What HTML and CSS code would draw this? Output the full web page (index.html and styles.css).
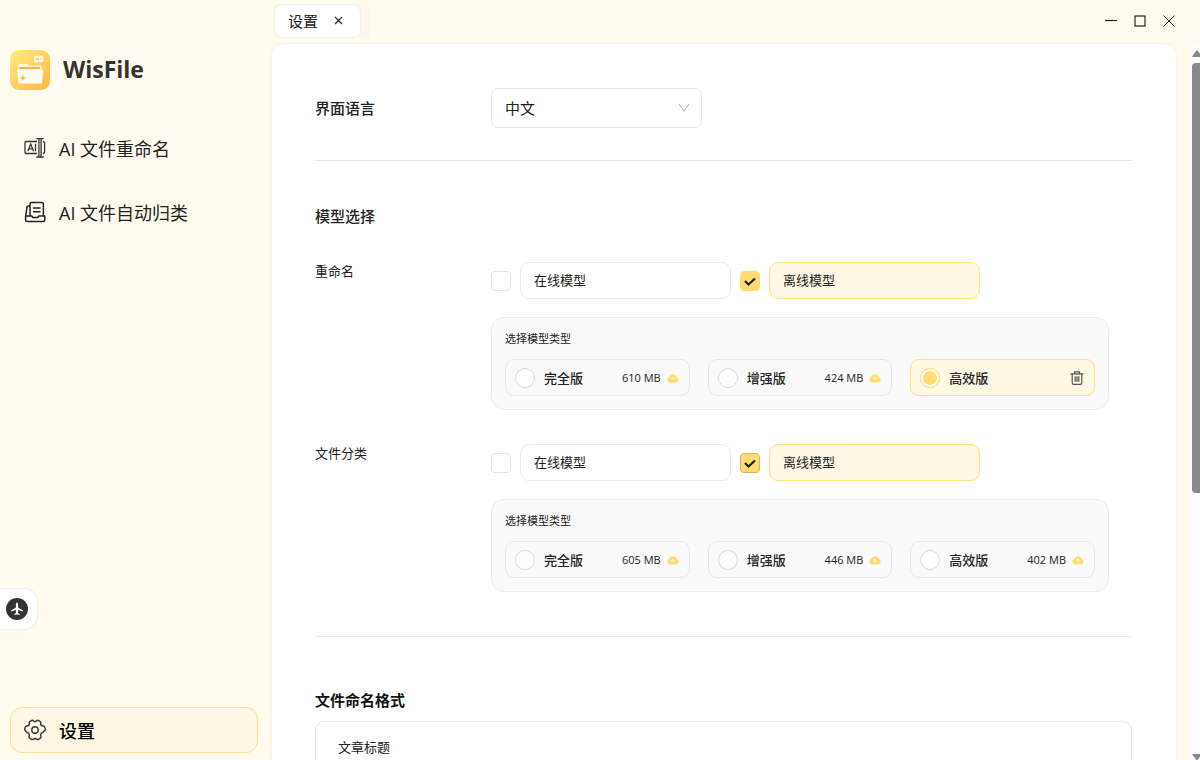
FILE: index.html
```html
<!DOCTYPE html>
<html lang="zh-CN">
<head>
    <meta charset="UTF-8">
    <meta name="viewport" content="width=device-width, initial-scale=1.0">
    <title>WisFile</title>
    <link rel="stylesheet" href="styles.css">
</head>
<body>
    <header class="titlebar">
        <div class="tabs">
            <div class="tab">
                <span>设置</span>
                <button class="icon-button" aria-label="关闭标签">
                    <svg width="9" height="9" viewBox="0 0 9 9"><path d="M1 1l7 7M8 1l-7 7" stroke="#333" stroke-width="1.3"/></svg>
                </button>
            </div>
        </div>
        <div class="window-controls">
            <button class="icon-button" aria-label="最小化">
                <svg width="12" height="12" viewBox="0 0 12 12"><path d="M0 5.5h12" stroke="#222" stroke-width="1.2"/></svg>
            </button>
            <button class="icon-button" aria-label="最大化">
                <svg width="12" height="12" viewBox="0 0 12 12"><rect x="1" y="1" width="10" height="10" fill="none" stroke="#222" stroke-width="1.2"/></svg>
            </button>
            <button class="icon-button" aria-label="关闭">
                <svg width="12" height="12" viewBox="0 0 12 12"><path d="M.5.5l11 11M11.5.5l-11 11" stroke="#333"/></svg>
            </button>
        </div>
    </header>

    <div class="layout">
        <aside class="sidebar">
            <div class="brand">
                <svg width="40" height="40" viewBox="0 0 40 40">
                    <defs>
                        <linearGradient id="logoBg" x1="0" y1="0" x2="1" y2="1">
                            <stop offset="0" stop-color="#ffec78"/>
                            <stop offset="1" stop-color="#ffb64a"/>
                        </linearGradient>
                    </defs>
                    <rect width="40" height="40" rx="9" fill="url(#logoBg)"/>
                    <path d="M8 15.500c0-1 .8-1.800 1.800-1.800h7l2 1.800h11c1.200 0 2 .8 2 1.800V21H8z" fill="#fff4dc"/>
                    <path d="M9.500 17h20.500v2.200h-20.500z" fill="#ffb347"/>
                    <path d="M8 19.500h24.200c.7 0 1.100.5 1 1.100l-1.200 11.400c-.1 1-.8 1.600-1.700 1.600H10c-.9 0-1.600-.6-1.700-1.600L7 20.600c-.1-.6.300-1.100 1-1.100z" fill="#fffdf8"/>
                    <path d="M12.800 24.500l1 2.600 2.600 1-2.600 1-1 2.600-1-2.600-2.600-1 2.600-1z" fill="#ffc04d"/>
                    <path d="M25 5.800h7.200c.6 0 1 .4 1 1v4.400c0 .6-.4 1-1 1h-5l-2 1.500v-1.500h-.2c-.6 0-1-.4-1-1V6.800c0-.6.400-1 1-1z" fill="#fff5d6"/>
                    <path d="M26 9h1M28.200 8.200v1.600M30.500 9h1" stroke="#f9a64a" stroke-width="1.200"/>
                </svg>
                <h1>WisFile</h1>
            </div>
            <nav class="nav">
                <a class="nav-item" href="#">
                    <svg width="22" height="22" viewBox="0 0 22 22" fill="none" stroke="#333" stroke-width="1.300">
                        <path d="M13 4.500H2.200A1.200 1.200 0 0 0 1 5.700v9.600a1.200 1.200 0 0 0 1.200 1.200H13M18.800 4.500a1.800 1.800 0 0 1 1.800 1.800v8.400a1.800 1.800 0 0 1-1.800 1.800"/>
                        <path d="M3.800 14.200L6.700 7l2.900 7.200M4.900 11.800h3.600M11.500 6.700v7.500"/>
                        <path d="M12.300 1.700h7.400M12.300 20h7.400M14.900 1.700v18.300M17.100 1.700v18.300"/>
                    </svg>
                    AI 文件重命名
                </a>
                <a class="nav-item" href="#">
                    <svg width="22" height="22" viewBox="0 0 22 22" fill="none" stroke="#222" stroke-width="1.500" stroke-linejoin="round">
                        <path d="M6 15V3.200A1.700 1.700 0 0 1 7.700 1.500h10A1.700 1.700 0 0 1 19.400 3.200V15"/>
                        <path d="M6 5H4.200A1.200 1.200 0 0 0 3 6.200L1.700 15"/>
                        <path d="M1.600 15h6.200l1 1.500h5l1-1.500h6v4a1.500 1.500 0 0 1-1.500 1.500H3.100a1.500 1.500 0 0 1-1.500-1.500z"/>
                        <path d="M9.500 7h6.500M9.500 10.700h6.500" stroke-linecap="round"/>
                    </svg>
                    AI 文件自动归类
                </a>
                <a class="nav-item nav-settings" href="#" aria-current="page">
                    <svg width="22" height="22" viewBox="0 0 22 22" fill="none" stroke="#333" stroke-width="1.400" stroke-linejoin="round">
                        <path d="M8 1.300Q9 1.200 9.500 2Q11 3.300 12.500 2Q13 1.200 14 1.300L16.300 2.600Q17 3.300 16.600 4.200Q16.500 6.800 19.200 7Q20.300 7.100 20.700 8L21.300 10.200Q21.400 11 20.700 11.600Q19.200 12.700 19.200 13.300Q17 13.600 16.600 15.800Q17.300 18 16.700 18.900L14.400 20.500Q13.500 20.900 12.800 20.200Q11 18.700 9.200 20.200Q8.500 20.900 7.600 20.500L5.300 18.900Q4.700 18 5.400 15.800Q5 13.600 2.800 13.300Q2.800 12.700 1.300 11.600Q.6 11 .7 10.200L1.300 8Q1.700 7.100 2.800 7Q5.500 6.800 5.400 4.200Q5 3.300 5.700 2.600Z"/>
                        <circle cx="11" cy="11" r="3.200"/>
                    </svg>
                    设置
                </a>
            </nav>
            <button class="float-button" aria-label="离线模式">
                <svg width="22" height="22" viewBox="0 0 22 22">
                    <circle cx="11" cy="11" r="11" fill="#333"/>
                    <path d="M11 4.800c.7 0 1.100.7 1.100 1.500v3.200l4.700 2.800v1.300l-4.700-1.500v2.900l1.500 1.100v1L11 16.400l-2.600.7v-1l1.500-1.100v-2.900l-4.700 1.500v-1.300l4.700-2.800V6.300c0-.8.400-1.500 1.100-1.500z" fill="#fff"/>
                </svg>
            </button>
        </aside>

        <main class="panel">
            <section class="section section-language">
                <label class="section-title" for="language">界面语言</label>
                <div class="select-wrap">
                    <select id="language">
                        <option>中文</option>
                        <option>English</option>
                    </select>
                    <svg width="12" height="10" viewBox="0 0 12 10"><path d="M1 1l5 7 5-7" fill="none" stroke="#bbb" stroke-width="1.200"/></svg>
                </div>
            </section>

            <section class="section section-models">
                <h2 class="section-title">模型选择</h2>
                <div class="row">
                    <div class="row-label">重命名</div>
                    <div class="row-content">
                        <div class="modes">
                            <input type="checkbox" id="rename-online">
                            <label class="mode" for="rename-online">在线模型</label>
                            <input type="checkbox" id="rename-offline" checked>
                            <label class="mode" for="rename-offline">离线模型</label>
                        </div>
                        <div class="types">
                            <h3>选择模型类型</h3>
                            <div class="type-list">
                                <div class="type">
                                    <input type="radio" name="rename-type" id="rename-full">
                                    <label for="rename-full">完全版</label>
                                    <span class="size">610 MB</span>
                                    <button class="icon-button" aria-label="下载"><svg width="12" height="10" viewBox="0 0 12 10"><use href="#cloud"/></svg></button>
                                </div>
                                <div class="type">
                                    <input type="radio" name="rename-type" id="rename-plus">
                                    <label for="rename-plus">增强版</label>
                                    <span class="size">424 MB</span>
                                    <button class="icon-button" aria-label="下载"><svg width="12" height="10" viewBox="0 0 12 10"><use href="#cloud"/></svg></button>
                                </div>
                                <div class="type selected">
                                    <input type="radio" name="rename-type" id="rename-fast" checked>
                                    <label for="rename-fast">高效版</label>
                                    <button class="icon-button" aria-label="删除">
                                        <svg width="14" height="14" viewBox="0 0 14 14" fill="none" stroke="#555" stroke-width="1.200"><path d="M.5 2.800h13M4.500 2.500V.8h5v1.700M2.200 3v8.700c0 1 .6 1.600 1.600 1.600h6.400c1 0 1.600-.6 1.600-1.600V3M5.200 5.200v5.600M7 5.200v5.600M8.800 5.200v5.600"/></svg>
                                    </button>
                                </div>
                            </div>
                        </div>
                    </div>
                </div>
                <div class="row">
                    <div class="row-label">文件分类</div>
                    <div class="row-content">
                        <div class="modes">
                            <input type="checkbox" id="sort-online">
                            <label class="mode" for="sort-online">在线模型</label>
                            <input type="checkbox" id="sort-offline" class="outlined" checked>
                            <label class="mode" for="sort-offline">离线模型</label>
                        </div>
                        <div class="types">
                            <h3>选择模型类型</h3>
                            <div class="type-list">
                                <div class="type">
                                    <input type="radio" name="sort-type" id="sort-full">
                                    <label for="sort-full">完全版</label>
                                    <span class="size">605 MB</span>
                                    <button class="icon-button" aria-label="下载"><svg width="12" height="10" viewBox="0 0 12 10"><use href="#cloud"/></svg></button>
                                </div>
                                <div class="type">
                                    <input type="radio" name="sort-type" id="sort-plus">
                                    <label for="sort-plus">增强版</label>
                                    <span class="size">446 MB</span>
                                    <button class="icon-button" aria-label="下载"><svg width="12" height="10" viewBox="0 0 12 10"><use href="#cloud"/></svg></button>
                                </div>
                                <div class="type">
                                    <input type="radio" name="sort-type" id="sort-fast">
                                    <label for="sort-fast">高效版</label>
                                    <span class="size">402 MB</span>
                                    <button class="icon-button" aria-label="下载"><svg width="12" height="10" viewBox="0 0 12 10"><use href="#cloud"/></svg></button>
                                </div>
                            </div>
                        </div>
                    </div>
                </div>
            </section>

            <section class="section section-format">
                <label class="section-title" for="name-format">文件命名格式</label>
                <input type="text" id="name-format" value="文章标题">
            </section>
        </main>

        <div class="scrollbar">
            <svg width="10" height="19" viewBox="0 0 10 19"><path d="M3 13q-1 0-.5-1l3.500-5q1-1.300 2 0l3.500 5v1z" fill="#888"/></svg>
            <div class="thumb"></div>
            <svg width="10" height="6" viewBox="0 0 10 6"><path d="M2 0h10l-4 5.500q-1 1-2 0z" fill="#888"/></svg>
        </div>
    </div>

    <svg class="symbols">
        <symbol id="cloud" viewBox="0 0 12 10">
            <path d="M3 9.500A2.900 2.900 0 0 1 2.200 3.900a4 4 0 0 1 7.600 0A2.900 2.900 0 0 1 9 9.500z" fill="#ffdc6e"/>
            <path d="M6 4.200v3M4.800 5.600L6 4.400l1.200 1.200" stroke="#fff" fill="none"/>
        </symbol>
    </svg>
</body>
</html>
```
FILE: styles.css
```css
* {
    margin: 0;
    padding: 0;
    box-sizing: border-box;
}

body {
    font-family: "Open Sans", "Noto Sans CJK SC", sans-serif;
    font-size: 13px;
    color: #222;
    background: #fffbee;
    height: 100vh;
    display: flex;
    flex-direction: column;
    overflow: hidden;
}

svg {
    display: block;
    flex-shrink: 0;
}

button,
input,
select {
    font: inherit;
    color: inherit;
}

.icon-button {
    border: none;
    background: none;
    cursor: pointer;
}

.symbols {
    display: none;
}

/* Title bar */
.titlebar {
    display: flex;
    justify-content: space-between;
    align-items: center;
    height: 44px;
    flex-shrink: 0;
    padding: 0 25px 2px 274px;
    border-bottom: 1px solid #fff8ea;
}

.tabs {
    padding-right: 9px;
    background: #fff7ea;
}

.tab {
    display: flex;
    align-items: center;
    gap: 16px;
    height: 34px;
    padding: 0 17px 0 13px;
    font-size: 15px;
    background: #fff;
    border: 1px solid #f0f0f0;
    border-radius: 8px;
}

.window-controls {
    display: flex;
    gap: 17px;
}

/* Layout */
.layout {
    display: flex;
    flex: 1;
    min-height: 0;
}

.sidebar {
    display: flex;
    flex-direction: column;
    width: 272px;
    flex-shrink: 0;
    padding: 6px 14px 7px 10px;
}

.brand {
    display: flex;
    align-items: center;
    gap: 13px;
    height: 40px;
    margin-bottom: 35px;
}

.brand h1 {
    font-size: 23px;
    line-height: 38px;
    padding-bottom: 2px;
    color: #333;
}

.nav {
    display: flex;
    flex-direction: column;
    flex: 1;
    gap: 18px;
}

.nav-item {
    display: flex;
    align-items: center;
    gap: 13px;
    height: 46px;
    padding: 0 13px;
    font-size: 18px;
    color: #222;
    text-decoration: none;
    border: 1px solid transparent;
    border-radius: 12px;
}

.nav-settings {
    margin-top: auto;
    font-weight: 500;
    color: #000;
    background: #fff8e5;
    border-color: #ffe08a;
}

.float-button {
    position: fixed;
    left: 0;
    bottom: 130px;
    padding: 9px 9px 9px 6px;
    background: #fff;
    border: 1px solid #eee;
    border-left: none;
    border-radius: 0 14px 14px 0;
}

.panel {
    flex: 1;
    min-width: 0;
    padding: 44px 44px 0 43px;
    background: #fff;
    border-radius: 14px 14px 0 0;
    box-shadow: 0 1px 4px rgba(0, 0, 0, 0.08);
}

/* Settings sections */
.section {
    border-bottom: 1px solid #e8e8e8;
}

.section-title {
    display: block;
    font-size: 15px;
    font-weight: 500;
    line-height: 22px;
}

.section-language {
    display: flex;
    align-items: center;
    padding-bottom: 32px;
}

.section-language .section-title {
    width: 176px;
}

.select-wrap {
    position: relative;
    width: 211px;
}

.select-wrap svg {
    position: absolute;
    right: 12px;
    top: 15px;
    pointer-events: none;
}

select {
    width: 100%;
    height: 40px;
    padding: 0 13px;
    font-size: 15px;
    background: #fff;
    border: 1px solid #e8e8e8;
    border-radius: 7px;
    appearance: none;
}

.section-models {
    padding: 44px 0;
}

.section-models .section-title {
    margin-bottom: 35px;
}

.row {
    display: flex;
}

.row + .row {
    margin-top: 34px;
}

.row-label {
    width: 176px;
    flex-shrink: 0;
    line-height: 18px;
}

.row-content {
    flex: 1;
    max-width: 618px;
}

.modes {
    display: flex;
    align-items: center;
    gap: 9px;
    margin-bottom: 18px;
}

.mode {
    width: 211px;
    height: 37px;
    padding: 0 13px;
    line-height: 35px;
    border: 1px solid #ebebeb;
    border-radius: 9px;
}

input[type="checkbox"] {
    width: 20px;
    height: 20px;
    flex-shrink: 0;
    border: 1px solid #e4e4e4;
    border-radius: 4px;
    background: #fff;
    appearance: none;
}

input[type="checkbox"]:checked {
    border-color: #ffdc73;
    background: #ffdc73 url("data:image/svg+xml,%3Csvg xmlns='http://www.w3.org/2000/svg' viewBox='0 0 18 18'%3E%3Cpath d='M4 9l3.500 3.500L14 6.500' fill='none' stroke='%23222' stroke-width='2.200'/%3E%3C/svg%3E") center / 18px no-repeat;
}

input[type="checkbox"].outlined:checked {
    border-color: #d4b55c;
}

input[type="checkbox"]:checked + .mode {
    background: #fff8e5;
    border-color: #ffdf80;
}

.types {
    padding: 12px 13px 13px;
    background: #fafafa;
    border: 1px solid #ebebeb;
    border-radius: 13px;
}

.types h3 {
    margin-bottom: 11px;
    font-size: 11px;
    font-weight: 400;
    line-height: 18px;
}

.type-list {
    display: grid;
    grid-template-columns: repeat(3, 1fr);
    gap: 18px;
}

.type {
    display: flex;
    align-items: center;
    height: 37px;
    padding: 0 10px 0 9px;
    border: 1px solid #e8e8ea;
    border-radius: 9px;
}

.type label {
    flex: 1;
    margin-left: 9px;
    font-weight: 500;
}

.type.selected {
    background: #fff8e5;
    border-color: #ffdf80;
}

.size {
    margin-right: 6px;
    font-size: 11px;
}

input[type="radio"] {
    width: 20px;
    height: 20px;
    border: 1px solid #d9d9d9;
    border-radius: 50%;
    background: #fff;
    appearance: none;
}

input[type="radio"]:checked {
    border-color: #ffdc73;
    background: #ffdc73;
    box-shadow: inset 0 0 0 2px #fff;
}

.section-format {
    padding-top: 52px;
    border-bottom: none;
}

.section-format .section-title {
    margin-bottom: 10px;
    font-weight: 700;
    color: #111;
}

input[type="text"] {
    width: 100%;
    height: 50px;
    padding: 0 22px;
    border: 1px solid #e8e8e8;
    border-radius: 9px;
}

/* Scrollbar */
.scrollbar {
    display: flex;
    flex-direction: column;
    width: 10px;
    margin-left: 14px;
    background: #fcfcfc;
    overflow: hidden;
}

.thumb {
    height: 60%;
    margin-left: 2px;
    background: #888;
    border-radius: 4px 0 0 4px;
}

.scrollbar svg:last-child {
    margin-top: auto;
}
```
